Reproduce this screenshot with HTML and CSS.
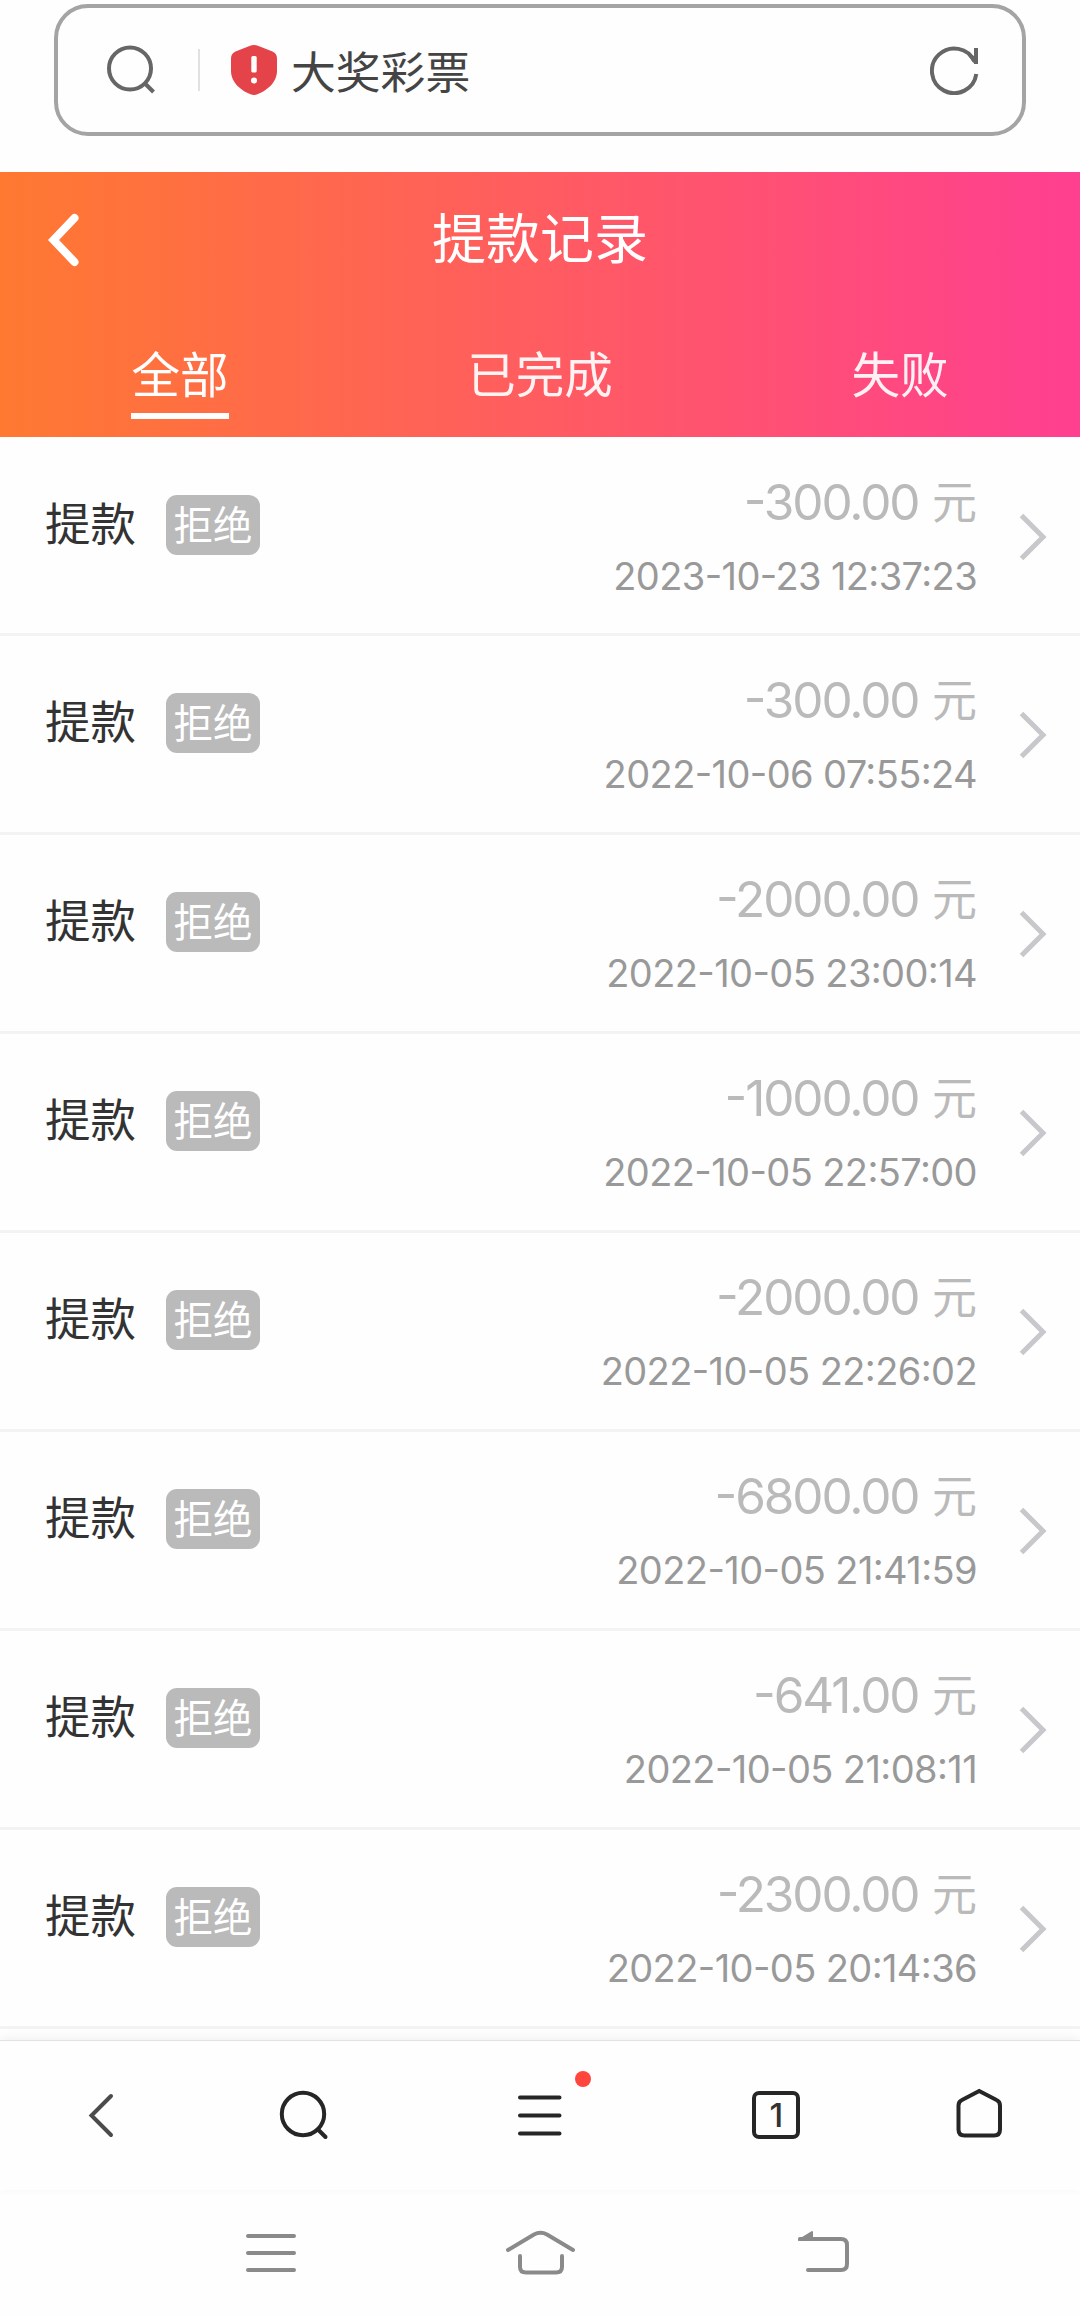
FILE: index.html
```html
<!DOCTYPE html>
<html lang="zh-CN">
<head>
<meta charset="utf-8">
<title>提款记录</title>
<link rel="stylesheet" href="styles.css">
</head>
<body>
<div class="browser-bar">
  <div class="address">
    <svg class="address-search" viewBox="0 0 50 50"><circle cx="24" cy="23.500" r="21"/><path d="M39 38.500l8.500 8.500"/></svg>
    <span class="divider"></span>
    <svg class="shield" viewBox="0 0 46 50"><path class="shield-body" d="M18.500 1Q23-.8 27.500 1L41.500 6.500Q46 8.500 46 13.500V26C46 38 35 46 26.500 49.200Q23 50.600 19.500 49.200C11 46 0 38 0 26V13.500Q0 8.500 4.500 6.500Z"/><rect x="20.300" y="11" width="5.400" height="16.500" rx="1.500"/><circle cx="23" cy="35.500" r="3"/></svg>
    <span class="site">大奖彩票</span>
    <svg class="reload" viewBox="0 0 50 50"><path d="M46.300 29A22.300 22.300 0 1 1 44.500 16.500"/><path d="M46 3V19"/><path class="reload-tip" d="M44 11V19H44.500L37 9.500Z"/></svg>
  </div>
</div>
<header class="header">
  <div class="titlebar">
    <svg class="back" viewBox="0 0 32 54"><path d="M26.500 5L5.500 27L26.500 49"/></svg>
    <h1>提款记录</h1>
  </div>
  <nav class="tabs">
    <span class="tab active">全部</span>
    <span class="tab">已完成</span>
    <span class="tab">失败</span>
  </nav>
</header>
<main class="list">
  <article class="row"><span class="kind">提款</span><span class="tag">拒绝</span><div class="detail"><div class="amount"><b>-300.00</b>元</div><time>2023-10-23 12:37:23</time></div><svg class="chevron" viewBox="0 0 28 48"><path d="M2.500 2.500L24 24L2.500 45.500"/></svg></article>
  <article class="row"><span class="kind">提款</span><span class="tag">拒绝</span><div class="detail"><div class="amount"><b>-300.00</b>元</div><time>2022-10-06 07:55:24</time></div><svg class="chevron" viewBox="0 0 28 48"><path d="M2.500 2.500L24 24L2.500 45.500"/></svg></article>
  <article class="row"><span class="kind">提款</span><span class="tag">拒绝</span><div class="detail"><div class="amount"><b>-2000.00</b>元</div><time>2022-10-05 23:00:14</time></div><svg class="chevron" viewBox="0 0 28 48"><path d="M2.500 2.500L24 24L2.500 45.500"/></svg></article>
  <article class="row"><span class="kind">提款</span><span class="tag">拒绝</span><div class="detail"><div class="amount"><b>-1000.00</b>元</div><time>2022-10-05 22:57:00</time></div><svg class="chevron" viewBox="0 0 28 48"><path d="M2.500 2.500L24 24L2.500 45.500"/></svg></article>
  <article class="row"><span class="kind">提款</span><span class="tag">拒绝</span><div class="detail"><div class="amount"><b>-2000.00</b>元</div><time>2022-10-05 22:26:02</time></div><svg class="chevron" viewBox="0 0 28 48"><path d="M2.500 2.500L24 24L2.500 45.500"/></svg></article>
  <article class="row"><span class="kind">提款</span><span class="tag">拒绝</span><div class="detail"><div class="amount"><b>-6800.00</b>元</div><time>2022-10-05 21:41:59</time></div><svg class="chevron" viewBox="0 0 28 48"><path d="M2.500 2.500L24 24L2.500 45.500"/></svg></article>
  <article class="row"><span class="kind">提款</span><span class="tag">拒绝</span><div class="detail"><div class="amount"><b>-641.00</b>元</div><time>2022-10-05 21:08:11</time></div><svg class="chevron" viewBox="0 0 28 48"><path d="M2.500 2.500L24 24L2.500 45.500"/></svg></article>
  <article class="row"><span class="kind">提款</span><span class="tag">拒绝</span><div class="detail"><div class="amount"><b>-2300.00</b>元</div><time>2022-10-05 20:14:36</time></div><svg class="chevron" viewBox="0 0 28 48"><path d="M2.500 2.500L24 24L2.500 45.500"/></svg></article>
</main>
<nav class="toolbar">
  <svg class="tool tool-back" viewBox="0 0 60 60"><path d="M40 11L20.500 30.500L40 50"/></svg>
  <svg class="tool" viewBox="0 0 60 60"><circle cx="29" cy="29" r="21.200"/><path d="M44.500 45L51.500 52"/></svg>
  <div class="tool-menu"><svg class="tool" viewBox="0 0 60 60"><path d="M10 12.500H49.500M10 30.500H49.500M10 48.500H49.500"/></svg><span class="dot"></span></div>
  <div class="tab-count">1</div>
  <svg class="tool" viewBox="0 0 60 60"><path d="M30.200 6L47.500 15Q51 16.500 51 20.500V44.500Q51 50.500 45 50.500H15.500Q9.500 50.500 9.500 44.500V20.500Q9.500 16.500 13 15Z"/></svg>
</nav>
<nav class="system">
  <svg viewBox="0 0 80 60"><path d="M18 13H64M18 30H64M18 47H64"/></svg>
  <svg viewBox="0 0 80 60"><path d="M8 27L34 11.500Q40.500 8 47 11.500L73 27M20 33V44Q20 49.500 26 49.500H56Q62 49.500 62 44V33"/></svg>
  <svg viewBox="0 0 80 60"><path d="M30 16H71Q77 16 77 22V41Q77 47 71 47H38"/><path class="fill" d="M29 17L42 9V15.500H29.500Z"/></svg>
</nav>
</body>
</html>
```
FILE: styles.css
```css
* { box-sizing: border-box; }

body {
  margin: 0;
  width: 1080px;
  height: 2316px;
  overflow: hidden;
  display: flex;
  flex-direction: column;
  background: #fefefe;
  font-family: "Noto Sans CJK SC", sans-serif;
}

svg {
  display: block;
  flex: none;
  fill: none;
  stroke-width: 4;
}

.browser-bar {
  height: 172px;
  padding: 4px 54px 0;
}

.address {
  height: 132px;
  padding: 0 42px 0 48px;
  border: 4px solid #a4a4a4;
  border-radius: 34px;
  display: flex;
  align-items: center;
}

.address-search {
  width: 50px;
  height: 50px;
  stroke: #666;
}

.divider {
  width: 2px;
  height: 42px;
  margin: 0 31px 0 42px;
  background: #e1e1e1;
}

.shield {
  width: 46px;
  height: 50px;
  fill: #fff;
}

.shield-body { fill: #e4434a; }

.site {
  margin: 0 auto 0 14px;
  font-size: 44.800px;
  line-height: 60px;
  color: #444;
}

.reload {
  width: 50px;
  height: 50px;
  stroke: #666;
}

.reload-tip { fill: #666; stroke: none; }

.header {
  height: 265px;
  color: #fff;
  background: linear-gradient(90deg, #ff7931, #ff3f90);
}

.titlebar {
  height: 136px;
  padding: 0 48px;
  display: grid;
  grid-template-columns: 32px 1fr 32px;
  align-items: center;
}

.back {
  width: 32px;
  height: 54px;
  stroke: #fff;
  stroke-width: 8;
  stroke-linecap: round;
}

h1 {
  margin: 0 0 8px;
  font-size: 54px;
  font-weight: 400;
  line-height: 72px;
  text-align: center;
}

.tabs {
  height: 129px;
  display: grid;
  grid-template-columns: repeat(3, 1fr);
  justify-items: center;
  align-items: start;
}

.tab {
  height: 111px;
  padding-top: 28px;
  font-size: 48.500px;
  line-height: 72px;
  opacity: .92;
}

.active {
  border-bottom: 6px solid #fff;
  opacity: 1;
}

.list { height: 1603px; }

.row {
  height: 199px;
  padding: 0 33px 0 45px;
  border-bottom: 3px solid #f3f3f3;
  display: flex;
  align-items: flex-start;
}

.row:first-child { padding-top: 1px; }

.kind {
  margin-top: 53px;
  font-size: 45.500px;
  line-height: 60px;
  color: #333;
}

.tag {
  width: 94px;
  height: 60px;
  margin: 57px 0 0 30px;
  border-radius: 11px;
  background: #bababa;
  color: #fff;
  font-size: 39.500px;
  line-height: 56px;
  text-align: center;
}

.detail {
  margin-left: auto;
  text-align: right;
}

.amount {
  margin-top: 32px;
  height: 60px;
  display: flex;
  justify-content: flex-end;
  gap: 13.500px;
  font-size: 45px;
  line-height: 60px;
  color: #bababa;
}

.amount b {
  padding-top: 2px;
  font: 400 49.500px/60px Inter, sans-serif;
  font-feature-settings: "case";
  letter-spacing: -2.100px;
}

time {
  display: block;
  margin-top: 16px;
  font: 400 38px/60px Inter, sans-serif;
  font-feature-settings: "case";
  letter-spacing: -.600px;
  color: #999;
}

.chevron {
  width: 28px;
  height: 48px;
  margin: 75px 0 0 42px;
  stroke: #c8c8cc;
  stroke-width: 5;
}

.toolbar {
  height: 150px;
  padding-bottom: 2px;
  border-top: 1px solid #e2e2e2;
  box-shadow: 0 -2px 10px rgba(0, 0, 0, .06);
  background: #fefefe;
  display: grid;
  grid-template-columns: 202.500px 202.500px 270px 202.500px 202.500px;
  justify-items: center;
  align-items: center;
}

.tool {
  width: 60px;
  height: 60px;
  stroke: #262626;
  stroke-linecap: round;
}

.tool-back { stroke: #4b4b4b; }

.tool-menu { position: relative; }

.dot {
  position: absolute;
  top: -14px;
  right: -21px;
  width: 16px;
  height: 16px;
  border-radius: 50%;
  background: #ff463c;
}

.tab-count {
  width: 48px;
  height: 48px;
  border: 4px solid #262626;
  border-radius: 7px;
  color: #333;
  font: 500 33px/40px Inter, sans-serif;
  text-align: center;
}

.system {
  height: 126px;
  padding: 0 135px;
  display: grid;
  grid-template-columns: repeat(3, 1fr);
  justify-items: center;
  align-items: center;
}

.system svg {
  width: 80px;
  height: 60px;
  stroke: #8a8a8a;
  stroke-linecap: round;
}

.system .fill { fill: #8a8a8a; stroke-width: 2; stroke-linejoin: round; }
```
